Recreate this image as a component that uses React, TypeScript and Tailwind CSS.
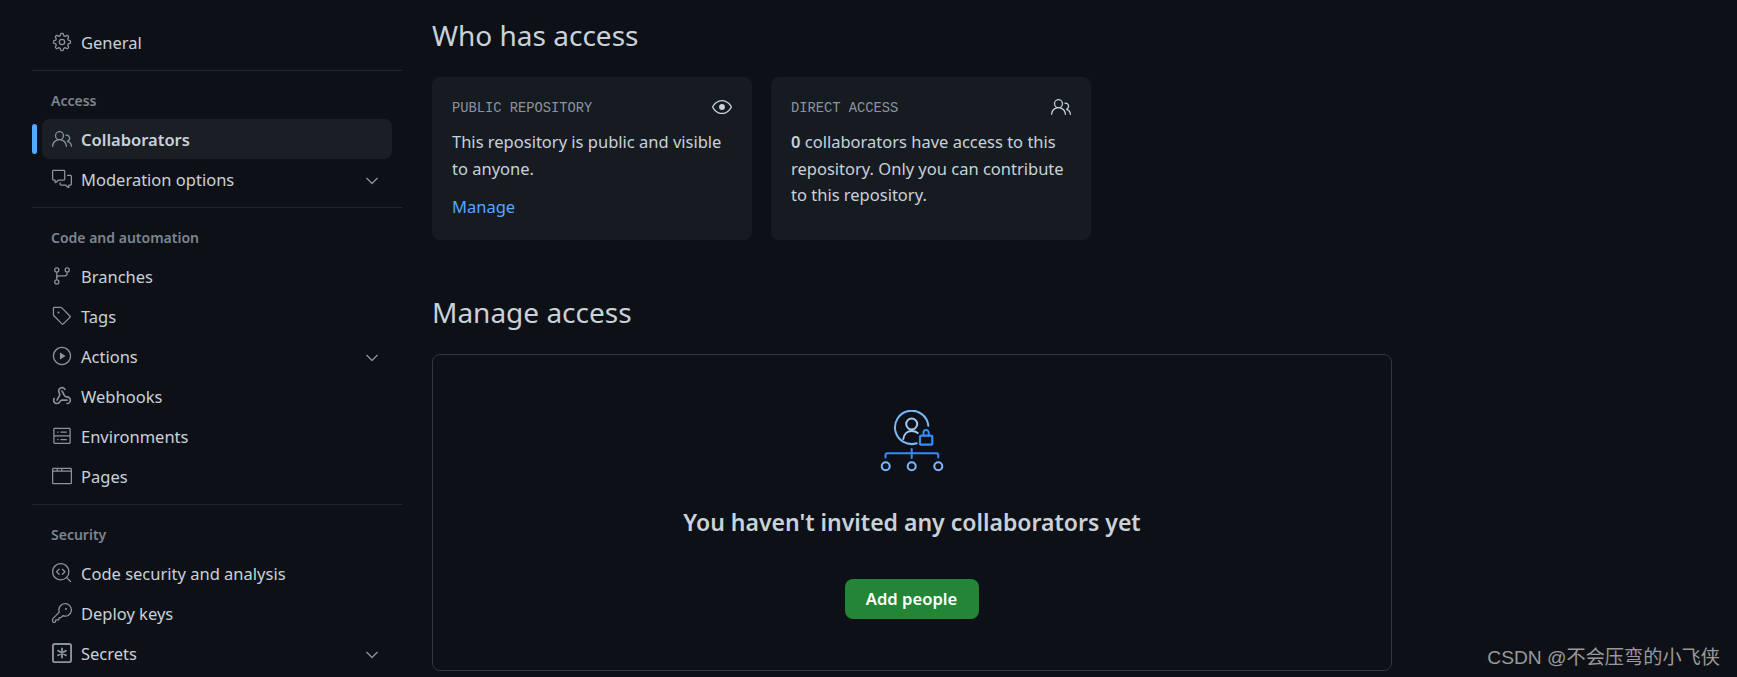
import type { ReactNode } from 'react';
import { Webhook } from 'lucide-react';
import {
  GoBrowser,
  GoChevronDown,
  GoCodescan,
  GoCommentDiscussion,
  GoEye,
  GoGear,
  GoGitBranch,
  GoKey,
  GoPeople,
  GoPlay,
  GoServer,
  GoTag,
} from 'react-icons/go';

interface NavItemProps {
  icon: ReactNode;
  label: string;
  active?: boolean;
  chevron?: boolean;
}

function KeyAsteriskIcon() {
  return (
    <svg width="20" height="20" viewBox="0 0 16 16" fill="none" stroke="currentColor">
      <rect x="0.75" y="0.75" width="14.5" height="14.5" rx="1.5" strokeWidth="1.5" />
      <path d="M8 4.4v7.2M4.9 6.2l6.2 3.6M11.1 6.2 4.9 9.8" strokeWidth="1.5" strokeLinecap="round" />
    </svg>
  );
}

function NavItem({ icon, label, active, chevron }: NavItemProps) {
  return (
    <div className="relative h-10 flex items-center">
      {active && <span className="absolute left-0 top-[5px] w-[5px] h-[30px] rounded-md bg-[#58a6ff]" />}
      <div
        className={`ml-2.5 w-[350px] h-10 flex items-center pl-2.5 pr-[10px] rounded-lg ${active ? 'bg-[#1a1f25] font-semibold' : ''}`}>
        <span className="w-5 h-5 flex items-center justify-center text-[#8b949e] text-[20px] shrink-0">{icon}</span>
        <span className="ml-[9px] pt-[3px] text-[16.5px] text-[#c9d1d9] flex-1">{label}</span>
        {chevron && (
          <span className="pt-[3px] text-[#8b949e] text-[20px] w-5 flex justify-center">
            <GoChevronDown />
          </span>
        )}
      </div>
    </div>
  );
}

function NavHeading({ children }: { children: ReactNode }) {
  return (
    <div className="h-12 flex items-end pb-2 pl-[19px]">
      <span className="text-[14px] leading-5 font-semibold text-[#7d8590]">{children}</span>
    </div>
  );
}

function NavDivider() {
  return <div className="h-px bg-[#21262d] mt-2" />;
}

function Sidebar() {
  return (
    <aside className="w-[370px] ml-8 pt-[22px] shrink-0">
      <NavItem icon={<GoGear />} label="General" />
      <NavDivider />
      <NavHeading>Access</NavHeading>
      <NavItem icon={<GoPeople />} label="Collaborators" active />
      <NavItem icon={<GoCommentDiscussion />} label="Moderation options" chevron />
      <NavDivider />
      <NavHeading>Code and automation</NavHeading>
      <NavItem icon={<GoGitBranch />} label="Branches" />
      <NavItem icon={<GoTag />} label="Tags" />
      <NavItem icon={<GoPlay />} label="Actions" chevron />
      <NavItem icon={<Webhook size={20} strokeWidth={1.9} />} label="Webhooks" />
      <NavItem icon={<GoServer />} label="Environments" />
      <NavItem icon={<GoBrowser />} label="Pages" />
      <NavDivider />
      <NavHeading>Security</NavHeading>
      <NavItem icon={<GoCodescan />} label="Code security and analysis" />
      <NavItem icon={<GoKey />} label="Deploy keys" />
      <NavItem icon={<KeyAsteriskIcon />} label="Secrets" chevron />
    </aside>
  );
}

function AccessCard({ title, icon, children }: { title: string; icon: ReactNode; children: ReactNode }) {
  return (
    <div className="w-[319.5px] h-[163px] rounded-lg bg-[#161b22] px-5 pt-[21px]">
      <div className="flex items-center justify-between h-5">
        <span className="pt-[2px] font-['Liberation_Mono',monospace] text-[13.76px] leading-4 text-[#8b949e]">{title}</span>
        <span className="pb-[2px] text-[#c9d1d9] text-[20px] leading-5">{icon}</span>
      </div>
      <div className="mt-[11px] text-[16.5px] leading-[26.5px] text-[#c9d1d9]">{children}</div>
    </div>
  );
}

function CollaboratorsIcon() {
  return (
    <svg width="64" height="62" viewBox="0 0 64 62" fill="none" strokeLinecap="round" strokeLinejoin="round">
      <path d="M48.3 15.7A16.7 16.7 0 1 0 36.7 33.3" stroke="#79b8ff" strokeWidth="2" />
      <circle cx="31.7" cy="14" r="5.5" stroke="#a5c8f5" strokeWidth="2" />
      <path d="M23.3 29c.5-5 4-8 8.4-8 2.5 0 4.5.7 6 2" stroke="#a5c8f5" strokeWidth="2" />
      <rect x="40" y="25.7" width="12.3" height="9" rx="1.5" stroke="#388bfd" strokeWidth="2.2" />
      <path d="M43.5 25.5v-2.9a2.6 2.6 0 0 1 5.2 0v2.9" stroke="#388bfd" strokeWidth="2" />
      <path d="M5.5 47.5v-2.2a2 2 0 0 1 2-2h48.8a2 2 0 0 1 2 2v2.2M31.7 39v9" stroke="#388bfd" strokeWidth="2" />
      <circle cx="5.7" cy="56.3" r="4" stroke="#79b8ff" strokeWidth="2" />
      <circle cx="31.7" cy="56.3" r="4" stroke="#79b8ff" strokeWidth="2" />
      <circle cx="58.3" cy="56.3" r="4" stroke="#79b8ff" strokeWidth="2" />
    </svg>
  );
}

function Main() {
  return (
    <main className="ml-[30px] w-[960px] shrink-0">
      <h2 className="pt-[17px] text-[28px] leading-9 font-normal text-[#c9d1d9]">Who has access</h2>
      <div className="flex gap-[19.5px] mt-6">
        <AccessCard title="PUBLIC REPOSITORY" icon={<GoEye />}>
          <p>This repository is public and visible to anyone.</p>
          <p className="mt-3 text-[#58a6ff]">Manage</p>
        </AccessCard>
        <AccessCard title="DIRECT ACCESS" icon={<GoPeople />}>
          <p>
            <span className="font-semibold">0</span> collaborators have access to this repository. Only you can
            contribute to this repository.
          </p>
        </AccessCard>
      </div>
      <h2 className="mt-[54px] text-[28px] leading-9 font-normal text-[#c9d1d9]">Manage access</h2>
      <section className="mt-6 h-[317px] rounded-lg border border-[#30363d] flex flex-col items-center pt-[55px]">
        <CollaboratorsIcon />
        <h3 className="mt-[34px] text-[23px] leading-8 font-semibold text-[#c9d1d9]">
          You haven't invited any collaborators yet
        </h3>
        <button className="mt-[41px] mr-px w-[134px] h-10 pt-px rounded-lg bg-[#238636] text-white text-[16.6px] font-semibold">
          Add people
        </button>
      </section>
    </main>
  );
}

export default function App() {
  return (
    <div className="relative h-[677px] overflow-hidden flex bg-[#0d1117] font-['Noto_Sans','Noto_Sans_CJK_SC',sans-serif]">
      <Sidebar />
      <Main />
      <span className="absolute right-[17px] top-[646px] text-[19.2px] leading-[23px] text-[#9a9a9a] font-['Liberation_Sans','Noto_Sans_CJK_SC',sans-serif]">
        CSDN @不会压弯的小飞侠
      </span>
    </div>
  );
}
